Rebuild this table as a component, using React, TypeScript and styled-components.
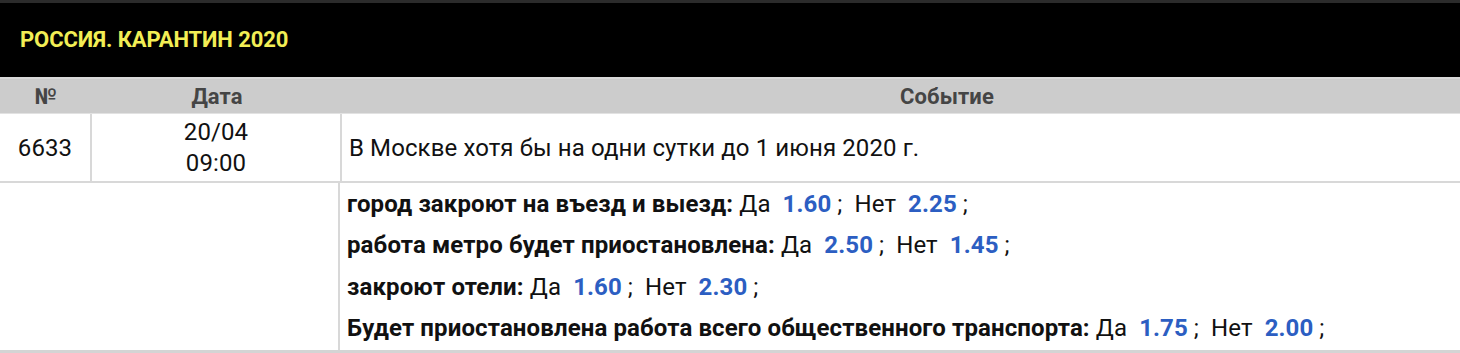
import styled, { createGlobalStyle } from 'styled-components';

const GlobalStyle = createGlobalStyle`
	html, body {
		margin: 0;
		padding: 0;
		background: #fff;
		overflow: hidden;
	}
	body {
		font-family: Roboto, 'Liberation Sans', sans-serif;
	}
`;

interface Outcome {
	label: string;
	yes: string;
	no: string;
}

const outcomes: Outcome[] = [
	{ label: 'город закроют на въезд и выезд:', yes: '1.60', no: '2.25' },
	{ label: 'работа метро будет приостановлена:', yes: '2.50', no: '1.45' },
	{ label: 'закроют отели:', yes: '1.60', no: '2.30' },
	{
		label: 'Будет приостановлена работа всего общественного транспорта:',
		yes: '1.75',
		no: '2.00',
	},
];

const App = () => {
	return (
		<Page>
			<GlobalStyle />
			<Title>РОССИЯ. КАРАНТИН 2020</Title>
			<Table>
				<HeadRow>
					<HeadCell>№</HeadCell>
					<HeadCell>Дата</HeadCell>
					<HeadCell>Событие</HeadCell>
				</HeadRow>
				<EventRow>
					<NumCell>6633</NumCell>
					<DateCell>
						20/04
						<br />
						09:00
					</DateCell>
					<TextCell>В Москве хотя бы на одни сутки до 1 июня 2020 г.</TextCell>
				</EventRow>
				<OddsRow>
					<Spacer />
					<OddsCell>
						{outcomes.map((o) => (
							<OddsLine key={o.label}>
								<Label>{o.label}</Label> Да <Coef>{o.yes}</Coef>
								<Sep>;</Sep>Нет <Coef>{o.no}</Coef>
								<Sep>;</Sep>
							</OddsLine>
						))}
					</OddsCell>
				</OddsRow>
			</Table>
		</Page>
	);
};

export default App;

const Page = styled.div`
	width: 1460px;
	height: 353px;
	overflow: hidden;
	font-size: 24px;
	color: #111;
	letter-spacing: 0.1px;
`;

const Title = styled.div`
	height: 77px;
	box-sizing: border-box;
	border-top: 3px solid #2b2b2b;
	background: #000;
	color: #f2ee55;
	font-weight: 700;
	font-size: 22px;
	padding: 0 20px 2px;
	display: flex;
	align-items: center;
	letter-spacing: -0.1px;
`;

const Table = styled.div`
	width: 1552px;
	border-top: 2px solid #d8d8d8;
	border-bottom: 3px solid #d4d4d4;
`;

const cols = `92px 250px 1fr`;

const HeadRow = styled.div`
	display: grid;
	grid-template-columns: ${cols};
	height: 34px;
	background: #cccccc;
	border-bottom: 1px solid #e2e2e2;
`;

const HeadCell = styled.div`
	display: flex;
	align-items: center;
	justify-content: center;
	font-weight: 700;
	color: #454545;
	font-size: 22px;
`;

const EventRow = styled.div`
	display: grid;
	grid-template-columns: ${cols};
	height: 67px;
	border-bottom: 2px solid #d8d8d8;
`;

const NumCell = styled.div`
	display: flex;
	align-items: center;
	justify-content: center;
	border-right: 2px solid #d8d8d8;
`;

const DateCell = styled.div`
	display: flex;
	flex-direction: column;
	align-items: center;
	justify-content: center;
	text-align: center;
	line-height: 31px;
	border-right: 2px solid #d8d8d8;
`;

const TextCell = styled.div`
	display: flex;
	align-items: center;
	padding-left: 7px;
`;

const OddsRow = styled.div`
	display: grid;
	grid-template-columns: 340px 1fr;
	height: 167px;
`;

const Spacer = styled.div`
	border-right: 2px solid #d8d8d8;
`;

const OddsCell = styled.div`
	display: flex;
	flex-direction: column;
	justify-content: center;
	padding-left: 7px;
`;

const OddsLine = styled.div`
	line-height: 41.5px;
	white-space: nowrap;
`;

const Label = styled.b`
	font-weight: 700;
	letter-spacing: 0.12px;
`;

const Coef = styled.span`
	color: #2c5ec2;
	font-weight: 700;
	margin: 0 6px 0 6px;
`;

const Sep = styled.span`
	margin-right: 12px;
`;
